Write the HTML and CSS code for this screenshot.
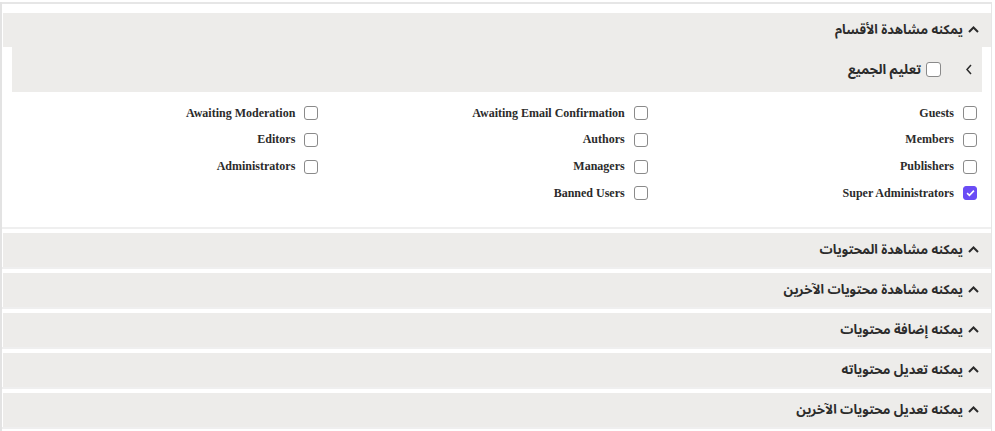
FILE: index.html
```html
<!DOCTYPE html>
<html lang="ar" dir="rtl">
<head>
<meta charset="utf-8">
<link rel="stylesheet" href="styles.css">
</head>
<body>
<div class="panel">
  <div class="topline"></div>

  <section class="card">
    <div class="card-head"><svg class="chev" viewBox="0 0 11 7" width="11" height="7"><path d="M1 6 L5.5 1.5 L10 6" fill="none" stroke="#2b2b2b" stroke-width="2"/></svg><span>يمكنه مشاهدة الأقسام</span></div>
    <div class="card-body">
      <div class="select-all">
        <svg class="chev-left" viewBox="0 0 6 11" width="6" height="11"><path d="M5 1 L1 5.5 L5 10" fill="none" stroke="#2b2b2b" stroke-width="1.5"/></svg>
        <span class="cb cb-lg"></span>
        <span class="sa-text">تعليم الجميع</span>
      </div>
      <div class="groups">
        <div class="item"><span class="cb"></span><span class="lbl">Guests</span></div>
        <div class="item"><span class="cb"></span><span class="lbl">Awaiting Email Confirmation</span></div>
        <div class="item"><span class="cb"></span><span class="lbl">Awaiting Moderation</span></div>
        <div class="item"><span class="cb"></span><span class="lbl">Members</span></div>
        <div class="item"><span class="cb"></span><span class="lbl">Authors</span></div>
        <div class="item"><span class="cb"></span><span class="lbl">Editors</span></div>
        <div class="item"><span class="cb"></span><span class="lbl">Publishers</span></div>
        <div class="item"><span class="cb"></span><span class="lbl">Managers</span></div>
        <div class="item"><span class="cb"></span><span class="lbl">Administrators</span></div>
        <div class="item"><span class="cb checked"><svg viewBox="0 0 10 8" width="9" height="8"><path d="M1.2 4.2 L3.8 6.6 L8.8 1.4" fill="none" stroke="#fff" stroke-width="1.8"/></svg></span><span class="lbl">Super Administrators</span></div>
        <div class="item"><span class="cb"></span><span class="lbl">Banned Users</span></div>
      </div>
    </div>
  </section>

  <section class="card">
    <div class="card-head"><svg class="chev" viewBox="0 0 11 7" width="11" height="7"><path d="M1 6 L5.5 1.5 L10 6" fill="none" stroke="#2b2b2b" stroke-width="2"/></svg><span>يمكنه مشاهدة المحتويات</span></div>
  </section>
  <section class="card">
    <div class="card-head"><svg class="chev" viewBox="0 0 11 7" width="11" height="7"><path d="M1 6 L5.5 1.5 L10 6" fill="none" stroke="#2b2b2b" stroke-width="2"/></svg><span>يمكنه مشاهدة محتويات الآخرين</span></div>
  </section>
  <section class="card">
    <div class="card-head"><svg class="chev" viewBox="0 0 11 7" width="11" height="7"><path d="M1 6 L5.5 1.5 L10 6" fill="none" stroke="#2b2b2b" stroke-width="2"/></svg><span>يمكنه إضافة محتويات</span></div>
  </section>
  <section class="card">
    <div class="card-head"><svg class="chev" viewBox="0 0 11 7" width="11" height="7"><path d="M1 6 L5.5 1.5 L10 6" fill="none" stroke="#2b2b2b" stroke-width="2"/></svg><span>يمكنه تعديل محتوياته</span></div>
  </section>
  <section class="card">
    <div class="card-head"><svg class="chev" viewBox="0 0 11 7" width="11" height="7"><path d="M1 6 L5.5 1.5 L10 6" fill="none" stroke="#2b2b2b" stroke-width="2"/></svg><span>يمكنه تعديل محتويات الآخرين</span></div>
  </section>
</div>
</body>
</html>
```

FILE: styles.css
```css
html, body {
  margin: 0;
  padding: 0;
  background: #fff;
}
body {
  font-family: "Noto Sans Arabic", "DejaVu Sans", sans-serif;
  color: #2b2b2b;
  overflow: hidden;
}
.panel {
  width: 992px;
  margin-right: 3px;
  box-sizing: border-box;
  border-left: 2px solid #e3e3e3;
  border-right: 1px solid #e6e6e6;
  height: 431px;
}
.topline {
  height: 2px;
  margin-top: 2px;
  background: #e6e6e6;
}
.card {
  margin-top: 4px;
  padding: 0 0 0 1px;
  border-bottom: 2px solid #efefef;
}
.card:first-of-type {
  margin-top: 9px;
}
.card-head {
  height: 34px;
  background: #edecea;
  display: flex;
  align-items: center;
  gap: 5px;
  padding-right: 12px;
  font-size: 13px;
  font-weight: 700;
  color: #2b2b2b;
}
.chev {
  display: block;
  margin-top: -1px;
}
.card-body {
  padding: 0 9px 20px 9px;
}
.select-all {
  height: 45px;
  background: #edecea;
  display: flex;
  align-items: center;
  padding-right: 10px;
}
.chev-left {
  display: block;
  margin-left: 25px;
}
.sa-text {
  font-size: 13.5px;
  font-weight: 700;
  margin-right: 5px;
}
.cb {
  display: inline-flex;
  align-items: center;
  justify-content: center;
  box-sizing: border-box;
  width: 14px;
  height: 14px;
  border: 1px solid #8a8a8a;
  border-radius: 3px;
  background: #fff;
  flex: none;
}
.cb-lg {
  width: 15px;
  height: 15px;
}
.cb.checked {
  background: #6a4cf5;
  border-color: #6a4cf5;
}
.cb svg {
  display: block;
}
.groups {
  margin: 8px -9px 0 -9px;
  display: grid;
  grid-template-columns: repeat(3, 1fr);
  grid-auto-rows: 26.67px;
}
.item {
  display: flex;
  align-items: center;
  gap: 9px;
  padding-right: 14px;
}
.lbl {
  font-family: "Liberation Serif", "Times New Roman", Tinos, serif;
  font-weight: 700;
  font-size: 12px;
  color: #2b2b2b;
}
```
